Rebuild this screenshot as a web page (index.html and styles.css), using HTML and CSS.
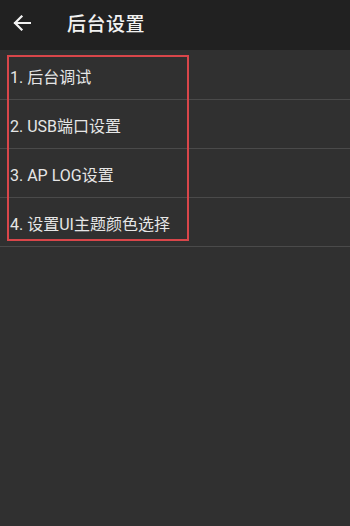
FILE: index.html
```html
<!DOCTYPE html>
<html lang="zh">
<head>
<meta charset="utf-8">
<link rel="stylesheet" href="styles.css">
</head>
<body>
<div class="app">
  <header class="bar">
    <svg class="back" width="18" height="16" viewBox="0 0 18 16"><path d="M17 8H2M8.5 1.5L2 8l6.5 6.5" fill="none" stroke="#f2f2f2" stroke-width="2.2" stroke-linecap="square"/></svg>
    <h1 class="title">后台设置</h1>
  </header>
  <div class="list">
    <div class="highlight"></div>
    <div class="row">1. 后台调试</div>
    <div class="row">2. USB端口设置</div>
    <div class="row">3. AP LOG设置</div>
    <div class="row">4. 设置UI主题颜色选择</div>
  </div>
</div>
</body>
</html>
```
FILE: styles.css
```css
html, body {
  margin: 0;
  padding: 0;
  background: #303030;
  font-family: Roboto, "Noto Sans CJK SC", sans-serif;
}
.app {
  width: 350px;
  height: 526px;
  background: #303030;
}
.bar {
  height: 50px;
  background: #212121;
  display: flex;
  align-items: center;
  box-sizing: border-box;
  padding-left: 13px;
  padding-bottom: 5px;
}
.back {
  display: block;
}
.title {
  margin: 0 0 0 36px;
  font-size: 19px;
  font-weight: 500;
  color: #f2f2f2;
  letter-spacing: 0.5px;
}
.list {
  position: relative;
  padding-top: 1px;
}
.row {
  display: flex;
  align-items: center;
  padding-left: 10px;
  padding-top: 2px;
  box-sizing: border-box;
  height: 49px;
  border-bottom: 1px solid #4a4a4a;
  font-size: 16px;
  color: #e6e6e6;
}
.highlight {
  position: absolute;
  left: 7px;
  top: 5px;
  width: 178px;
  height: 182px;
  border: 2px solid #d9464a;
  pointer-events: none;
}
```
